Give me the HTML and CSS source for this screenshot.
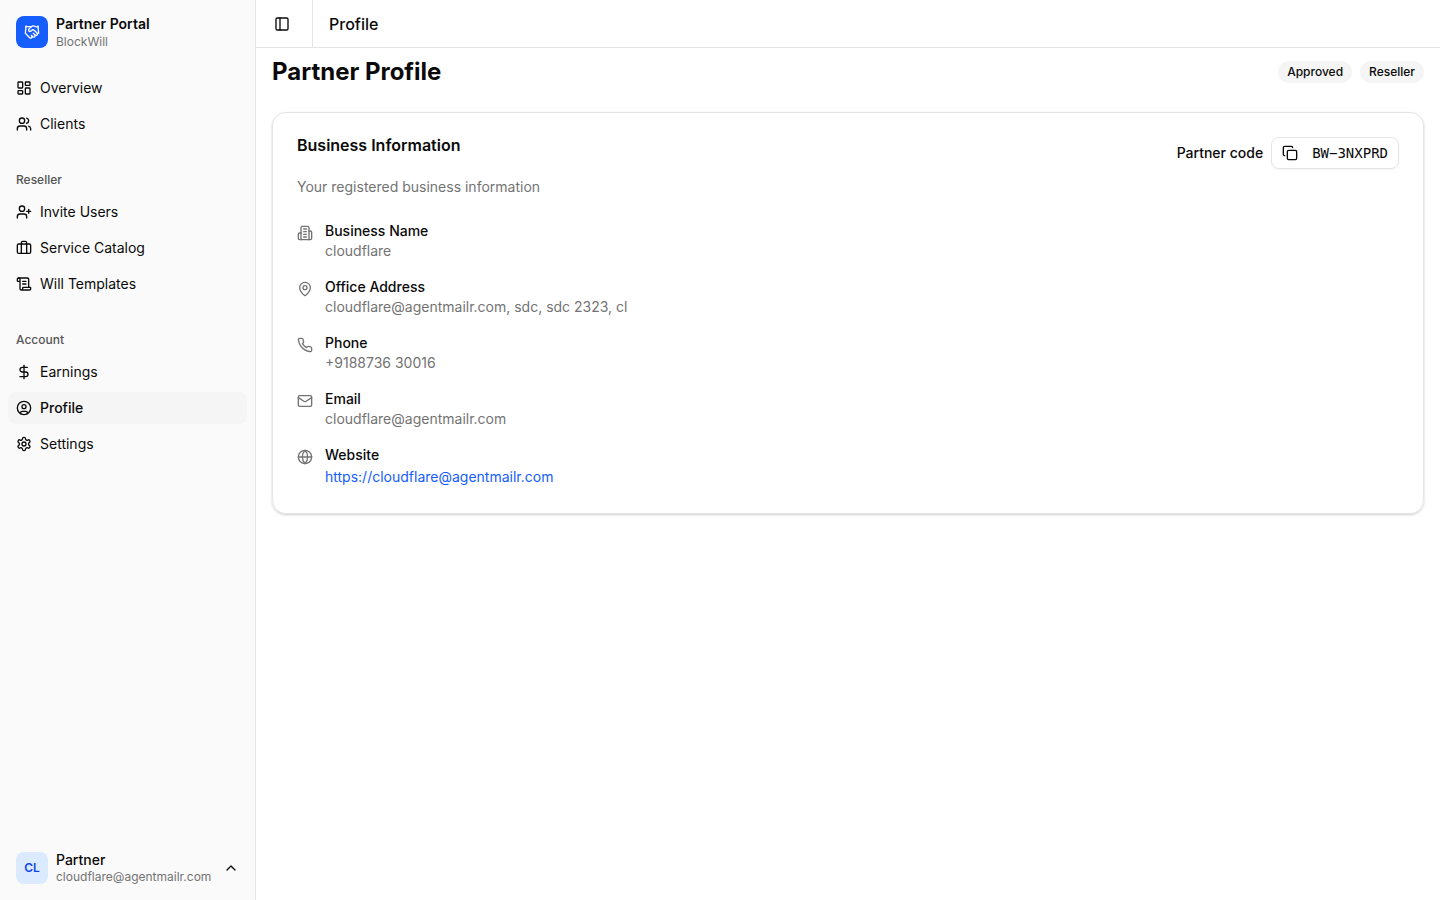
FILE: index.html
```html
<!DOCTYPE html>
<html lang="en">
<head>
  <meta charset="UTF-8">
  <meta name="viewport" content="width=device-width, initial-scale=1">
  <title>Profile - Partner Portal</title>
  <link rel="stylesheet" href="styles.css">
</head>
<body>
  <div class="layout">
    <aside class="sidebar">
      <a class="brand" href="#">
        <span class="brand-logo">
          <svg class="icon" viewBox="0 0 24 24"><path d="m11 17 2 2a1 1 0 1 0 3-3"/><path d="m14 14 2.5 2.5a1 1 0 1 0 3-3l-3.88-3.88a3 3 0 0 0-4.24 0l-.88.88a1 1 0 1 1-3-3l2.81-2.81a5.79 5.79 0 0 1 7.06-.87l.47.28a2 2 0 0 0 1.42.25L21 4"/><path d="m21 3 1 11h-2"/><path d="M3 3 2 14l6.5 6.5a1 1 0 1 0 3-3"/><path d="M3 4h8"/></svg>
        </span>
        <span class="two-line">
          <span class="line-title brand-name">Partner Portal</span>
          <span class="line-sub">BlockWill</span>
        </span>
      </a>

      <nav class="nav">
        <div class="nav-group">
          <a class="nav-link" href="#">
            <svg class="icon" viewBox="0 0 24 24"><rect width="7" height="9" x="3" y="3" rx="1"/><rect width="7" height="5" x="14" y="3" rx="1"/><rect width="7" height="9" x="14" y="12" rx="1"/><rect width="7" height="5" x="3" y="16" rx="1"/></svg>
            Overview
          </a>
          <a class="nav-link" href="#">
            <svg class="icon" viewBox="0 0 24 24"><path d="M16 21v-2a4 4 0 0 0-4-4H6a4 4 0 0 0-4 4v2"/><circle cx="9" cy="7" r="4"/><path d="M22 21v-2a4 4 0 0 0-3-3.87"/><path d="M16 3.13a4 4 0 0 1 0 7.75"/></svg>
            Clients
          </a>
        </div>

        <div class="nav-group">
          <h2 class="nav-label">Reseller</h2>
          <a class="nav-link" href="#">
            <svg class="icon" viewBox="0 0 24 24"><path d="M16 21v-2a4 4 0 0 0-4-4H6a4 4 0 0 0-4 4v2"/><circle cx="9" cy="7" r="4"/><path d="M19 8v6"/><path d="M22 11h-6"/></svg>
            Invite Users
          </a>
          <a class="nav-link" href="#">
            <svg class="icon" viewBox="0 0 24 24"><path d="M16 20V4a2 2 0 0 0-2-2h-4a2 2 0 0 0-2 2v16"/><rect width="20" height="14" x="2" y="6" rx="2"/></svg>
            Service Catalog
          </a>
          <a class="nav-link" href="#">
            <svg class="icon" viewBox="0 0 24 24"><path d="M15 12h-5"/><path d="M15 8h-5"/><path d="M19 17V5a2 2 0 0 0-2-2H4"/><path d="M8 21h12a2 2 0 0 0 2-2v-1a1 1 0 0 0-1-1H11a1 1 0 0 0-1 1v1a2 2 0 1 1-4 0V5a2 2 0 1 0-4 0v2a1 1 0 0 0 1 1h3"/></svg>
            Will Templates
          </a>
        </div>

        <div class="nav-group">
          <h2 class="nav-label">Account</h2>
          <a class="nav-link" href="#">
            <svg class="icon" viewBox="0 0 24 24"><path d="M12 2v20"/><path d="M17 5H9.5a3.5 3.5 0 0 0 0 7h5a3.5 3.5 0 0 1 0 7H6"/></svg>
            Earnings
          </a>
          <a class="nav-link active" href="#" aria-current="page">
            <svg class="icon" viewBox="0 0 24 24"><circle cx="12" cy="12" r="10"/><circle cx="12" cy="10" r="3"/><path d="M7 20.662V19a2 2 0 0 1 2-2h6a2 2 0 0 1 2 2v1.662"/></svg>
            Profile
          </a>
          <a class="nav-link" href="#">
            <svg class="icon" viewBox="0 0 24 24"><path d="M12.22 2h-.44a2 2 0 0 0-2 2v.18a2 2 0 0 1-1 1.73l-.43.25a2 2 0 0 1-2 0l-.15-.08a2 2 0 0 0-2.73.73l-.22.38a2 2 0 0 0 .73 2.73l.15.1a2 2 0 0 1 1 1.72v.51a2 2 0 0 1-1 1.74l-.15.09a2 2 0 0 0-.73 2.73l.22.38a2 2 0 0 0 2.73.73l.15-.08a2 2 0 0 1 2 0l.43.25a2 2 0 0 1 1 1.73V20a2 2 0 0 0 2 2h.44a2 2 0 0 0 2-2v-.18a2 2 0 0 1 1-1.73l.43-.25a2 2 0 0 1 2 0l.15.08a2 2 0 0 0 2.73-.73l.22-.39a2 2 0 0 0-.73-2.73l-.15-.08a2 2 0 0 1-1-1.74v-.5a2 2 0 0 1 1-1.74l.15-.09a2 2 0 0 0 .73-2.73l-.22-.38a2 2 0 0 0-2.73-.73l-.15.08a2 2 0 0 1-2 0l-.43-.25a2 2 0 0 1-1-1.73V4a2 2 0 0 0-2-2z"/><circle cx="12" cy="12" r="3"/></svg>
            Settings
          </a>
        </div>
      </nav>

      <button class="account" type="button">
        <span class="avatar">CL</span>
        <span class="two-line">
          <span class="line-title">Partner</span>
          <span class="line-sub">cloudflare@agentmailr.com</span>
        </span>
        <svg class="icon" viewBox="0 0 24 24"><path d="m18 15-6-6-6 6"/></svg>
      </button>
    </aside>

    <div class="content">
      <header class="topbar">
        <div class="toggle-wrap">
          <button class="toggle" type="button" aria-label="Toggle sidebar">
            <svg class="icon" viewBox="0 0 24 24"><rect width="18" height="18" x="3" y="3" rx="2"/><path d="M9 3v18"/></svg>
          </button>
        </div>
        <span class="crumb">Profile</span>
      </header>

      <main class="page">
        <div class="page-head">
          <h1 class="page-title">Partner Profile</h1>
          <div class="badges">
            <span class="badge">Approved</span>
            <span class="badge">Reseller</span>
          </div>
        </div>

        <section class="card">
          <div class="card-head">
            <h2 class="card-title">Business Information</h2>
            <div class="code">
              <span class="code-label" id="code-label">Partner code</span>
              <button class="code-button" type="button" aria-describedby="code-label">
                <svg class="icon" viewBox="0 0 24 24"><rect width="14" height="14" x="8" y="8" rx="2"/><path d="M4 16c-1.1 0-2-.9-2-2V4c0-1.1.9-2 2-2h10c1.1 0 2 .9 2 2"/></svg>
                <span class="code-value">BW−3NXPRD</span>
              </button>
            </div>
          </div>
          <p class="card-text">Your registered business information</p>

          <dl class="details">
            <div class="detail">
              <svg class="icon" viewBox="0 0 24 24"><path d="M6 22V4a2 2 0 0 1 2-2h8a2 2 0 0 1 2 2v18Z"/><path d="M6 12H4a2 2 0 0 0-2 2v6a2 2 0 0 0 2 2h2"/><path d="M18 9h2a2 2 0 0 1 2 2v9a2 2 0 0 1-2 2h-2"/><path d="M10 6h4"/><path d="M10 10h4"/><path d="M10 14h4"/><path d="M10 18h4"/></svg>
              <dt>Business Name</dt>
              <dd>cloudflare</dd>
            </div>
            <div class="detail">
              <svg class="icon" viewBox="0 0 24 24"><path d="M20 10c0 4.993-5.539 10.193-7.399 11.799a1 1 0 0 1-1.202 0C9.539 20.193 4 14.993 4 10a8 8 0 0 1 16 0"/><circle cx="12" cy="10" r="3"/></svg>
              <dt>Office Address</dt>
              <dd>cloudflare@agentmailr.com, sdc, sdc 2323, cl</dd>
            </div>
            <div class="detail">
              <svg class="icon" viewBox="0 0 24 24"><path d="M22 16.92v3a2 2 0 0 1-2.18 2 19.79 19.79 0 0 1-8.63-3.07 19.5 19.5 0 0 1-6-6 19.79 19.79 0 0 1-3.07-8.67A2 2 0 0 1 4.11 2h3a2 2 0 0 1 2 1.72 12.84 12.84 0 0 0 .7 2.81 2 2 0 0 1-.45 2.11L8.09 9.91a16 16 0 0 0 6 6l1.27-1.27a2 2 0 0 1 2.11-.45 12.84 12.84 0 0 0 2.81.7A2 2 0 0 1 22 16.92z"/></svg>
              <dt>Phone</dt>
              <dd>+9188736 30016</dd>
            </div>
            <div class="detail">
              <svg class="icon" viewBox="0 0 24 24"><rect width="20" height="16" x="2" y="4" rx="2"/><path d="m22 7-8.97 5.7a1.94 1.94 0 0 1-2.06 0L2 7"/></svg>
              <dt>Email</dt>
              <dd>cloudflare@agentmailr.com</dd>
            </div>
            <div class="detail">
              <svg class="icon" viewBox="0 0 24 24"><circle cx="12" cy="12" r="10"/><path d="M12 2a14.5 14.5 0 0 0 0 20 14.5 14.5 0 0 0 0-20"/><path d="M2 12h20"/></svg>
              <dt>Website</dt>
              <dd class="detail-link"><a href="#">https://cloudflare@agentmailr.com</a></dd>
            </div>
          </dl>
        </section>
      </main>
    </div>
  </div>
</body>
</html>
```
FILE: styles.css
```css
* {
  box-sizing: border-box;
}
body, h1, h2, p, dl, dd {
  margin: 0;
}
body {
  font-family: Inter, "Liberation Sans", sans-serif;
  font-size: 14px;
  line-height: 20px;
  color: #0a0a0a;
  background: #fff;
}
a {
  color: inherit;
  text-decoration: none;
}
button {
  font: inherit;
  color: inherit;
  background: none;
  border: 0;
  padding: 0;
  cursor: pointer;
}
.icon {
  width: 16px;
  height: 16px;
  flex-shrink: 0;
  fill: none;
  stroke: currentColor;
  stroke-width: 2;
  stroke-linecap: round;
  stroke-linejoin: round;
}

.layout {
  display: flex;
  min-height: 100vh;
}

/* Sidebar */
.sidebar {
  display: flex;
  flex-direction: column;
  flex: 0 0 256px;
  padding: 8px;
  background: #fafafa;
  border-right: 1px solid #e5e5e5;
}
.brand, .account {
  display: flex;
  align-items: center;
  gap: 8px;
  height: 48px;
  padding: 8px;
  text-align: left;
}
.brand-logo, .avatar {
  display: flex;
  align-items: center;
  justify-content: center;
  width: 32px;
  height: 32px;
  border-radius: 8px;
}
.brand-logo {
  background: #155dfc;
  color: #fff;
}
.two-line {
  display: flex;
  flex-direction: column;
  flex: 1;
}
.line-title {
  font-weight: 500;
  line-height: 18px;
}
.brand-name {
  font-weight: 600;
  line-height: 20px;
}
.line-sub {
  font-size: 12px;
  line-height: 16px;
  color: #737373;
}
.nav {
  display: flex;
  flex-direction: column;
  flex: 1;
  gap: 24px;
  padding-top: 16px;
}
.nav-group {
  display: flex;
  flex-direction: column;
  gap: 4px;
}
.nav-label {
  padding: 0 8px;
  margin-bottom: -4px;
  font-size: 12px;
  font-weight: 500;
  line-height: 32px;
  color: #545454;
}
.nav-link {
  display: flex;
  align-items: center;
  gap: 8px;
  height: 32px;
  padding: 8px;
  border-radius: 8px;
}
.nav-link:hover, .active {
  background: #f5f5f5;
}
.active {
  font-weight: 500;
}
.avatar {
  background: #dbeafe;
  color: #1447e6;
  font-size: 12px;
  font-weight: 600;
}

/* Top bar */
.content {
  flex: 1;
  min-width: 0;
}
.topbar {
  display: flex;
  align-items: center;
  height: 48px;
  border-bottom: 1px solid #e5e5e5;
}
.toggle-wrap {
  display: flex;
  align-items: center;
  align-self: stretch;
  padding: 0 16px 0 12px;
  border-right: 1px solid #e5e5e5;
}
.toggle {
  display: flex;
  padding: 6px;
}
.crumb {
  padding-left: 16px;
  font-size: 16px;
  font-weight: 500;
}

/* Page */
.page {
  padding: 8px 16px;
}
.page-head {
  display: flex;
  align-items: center;
  justify-content: space-between;
  margin-bottom: 24px;
}
.page-title {
  font-size: 24px;
  font-weight: 700;
  line-height: 32px;
}
.badges {
  display: flex;
  gap: 8px;
}
.badge {
  padding: 3px 9px;
  border-radius: 12px;
  background: #f5f5f5;
  font-size: 12px;
  font-weight: 500;
  line-height: 16px;
}
.card {
  padding: 24px;
  border: 1px solid #e5e5e5;
  border-radius: 14px;
  box-shadow: 0 1px 3px rgba(0, 0, 0, 0.1), 0 1px 2px rgba(0, 0, 0, 0.1);
}
.card-head {
  display: flex;
  justify-content: space-between;
}
.card-title {
  font-size: 16px;
  font-weight: 600;
  line-height: 16px;
}
.code {
  display: flex;
  align-items: center;
  gap: 8px;
}
.code-label {
  font-weight: 500;
}
.code-button {
  display: flex;
  align-items: center;
  gap: 14px;
  height: 32px;
  padding: 0 10px;
  border: 1px solid #e5e5e5;
  border-radius: 8px;
  box-shadow: 0 1px 2px rgba(0, 0, 0, 0.05);
}
.code-value {
  font-family: "DejaVu Sans Mono", monospace;
}
.card-text {
  margin-top: 8px;
  color: #737373;
}
.details {
  display: flex;
  flex-direction: column;
  gap: 16px;
  margin-top: 24px;
}
.detail {
  display: grid;
  grid-template-columns: 16px 1fr;
  column-gap: 12px;
}
.detail .icon {
  grid-row: span 2;
  margin-top: 4px;
  color: #737373;
}
.detail dt {
  font-weight: 500;
}
.detail dd {
  color: #737373;
}
.detail .detail-link {
  padding: 2px 0;
  color: #155dfc;
}
```
